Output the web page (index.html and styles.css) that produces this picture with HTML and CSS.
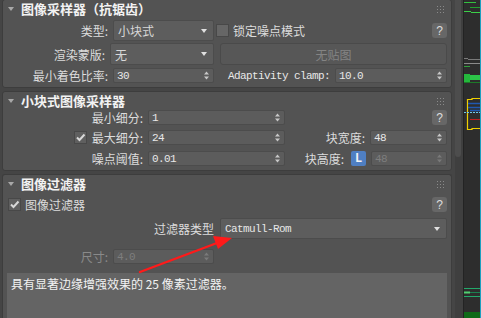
FILE: index.html
```html
<!DOCTYPE html>
<html lang="zh-CN">
<head>
  <meta charset="UTF-8">
  <title>图像采样器</title>
  <link rel="stylesheet" href="styles.css">
</head>
<body>
  <div class="app">
    <div class="panel">

      <!-- 图像采样器（抗锯齿） -->
      <section class="rollout">
        <div class="rollout-head">
          <span class="caret"></span>
          <h2>图像采样器（抗锯齿）</h2>
          <svg class="grip" width="7" height="7"><g fill="#8a8a8a"><rect x="0" y="0" width="1" height="1"/><rect x="3" y="0" width="1" height="1"/><rect x="6" y="0" width="1" height="1"/><rect x="0" y="3" width="1" height="1"/><rect x="3" y="3" width="1" height="1"/><rect x="6" y="3" width="1" height="1"/><rect x="0" y="6" width="1" height="1"/><rect x="3" y="6" width="1" height="1"/><rect x="6" y="6" width="1" height="1"/></g></svg>
        </div>
        <div class="row h21 mt2">
          <label class="lbl w105">类型:</label>
          <div class="dropdown w101">小块式<i class="dd-arrow"></i></div>
          <span class="check ml7"></span>
          <span class="txt">锁定噪点模式</span>
          <span class="help">?</span>
        </div>
        <div class="row h22 mt2">
          <label class="lbl w102">渲染蒙版:</label>
          <div class="dropdown w104">无<i class="dd-arrow"></i></div>
          <div class="map-btn">无贴图</div>
        </div>
        <div class="row h15 mt3">
          <label class="lbl w105">最小着色比率:</label>
          <div class="field w101"><span>30</span><svg class="spin" width="5" height="9"><path d="M0 3.5 L2.5 0.5 L5 3.5Z M0 5.5 L5 5.5 L2.5 8.5Z"/></svg></div>
          <label class="mono-lbl">Adaptivity clamp:</label>
          <div class="field w112 push"><span>10.0</span><svg class="spin" width="5" height="9"><path d="M0 3.5 L2.5 0.5 L5 3.5Z M0 5.5 L5 5.5 L2.5 8.5Z"/></svg></div>
        </div>
      </section>

      <!-- 小块式图像采样器 -->
      <section class="rollout">
        <div class="rollout-head">
          <span class="caret"></span>
          <h2>小块式图像采样器</h2>
          <svg class="grip" width="7" height="7"><g fill="#8a8a8a"><rect x="0" y="0" width="1" height="1"/><rect x="3" y="0" width="1" height="1"/><rect x="6" y="0" width="1" height="1"/><rect x="0" y="3" width="1" height="1"/><rect x="3" y="3" width="1" height="1"/><rect x="6" y="3" width="1" height="1"/><rect x="0" y="6" width="1" height="1"/><rect x="3" y="6" width="1" height="1"/><rect x="6" y="6" width="1" height="1"/></g></svg>
        </div>
        <div class="row h15">
          <label class="lbl w140">最小细分:</label>
          <div class="field w137"><span>1</span><svg class="spin" width="5" height="9"><path d="M0 3.5 L2.5 0.5 L5 3.5Z M0 5.5 L5 5.5 L2.5 8.5Z"/></svg></div>
          <span class="help">?</span>
        </div>
        <div class="row h15 mt5">
          <label class="lbl w140"><span class="check on"><svg width="11" height="11" viewBox="0 0 11 11"><path d="M2 5.5 L4.5 8 L9.5 2.5" fill="none" stroke="#d8d8d8" stroke-width="2"/></svg></span>最大细分:</label>
          <div class="field w137"><span>24</span><svg class="spin" width="5" height="9"><path d="M0 3.5 L2.5 0.5 L5 3.5Z M0 5.5 L5 5.5 L2.5 8.5Z"/></svg></div>
          <label class="lbl push">块宽度:</label>
          <div class="field w77"><span>48</span><svg class="spin" width="5" height="9"><path d="M0 3.5 L2.5 0.5 L5 3.5Z M0 5.5 L5 5.5 L2.5 8.5Z"/></svg></div>
        </div>
        <div class="row h15 mt6">
          <label class="lbl w140">噪点阈值:</label>
          <div class="field w137"><span>0.01</span><svg class="spin" width="5" height="9"><path d="M0 3.5 L2.5 0.5 L5 3.5Z M0 5.5 L5 5.5 L2.5 8.5Z"/></svg></div>
          <label class="lbl push">块高度:</label>
          <span class="lock">L</span>
          <div class="field w76 off"><span>48</span><svg class="spin" width="5" height="9"><path d="M0 3.5 L2.5 0.5 L5 3.5Z M0 5.5 L5 5.5 L2.5 8.5Z"/></svg></div>
        </div>
      </section>

      <!-- 图像过滤器 -->
      <section class="rollout last">
        <div class="rollout-head">
          <span class="caret"></span>
          <h2>图像过滤器</h2>
          <svg class="grip" width="7" height="7"><g fill="#8a8a8a"><rect x="0" y="0" width="1" height="1"/><rect x="3" y="0" width="1" height="1"/><rect x="6" y="0" width="1" height="1"/><rect x="0" y="3" width="1" height="1"/><rect x="3" y="3" width="1" height="1"/><rect x="6" y="3" width="1" height="1"/><rect x="0" y="6" width="1" height="1"/><rect x="3" y="6" width="1" height="1"/><rect x="6" y="6" width="1" height="1"/></g></svg>
        </div>
        <div class="row h15 mt4 indent">
          <span class="check on"><svg width="11" height="11" viewBox="0 0 11 11"><path d="M2 5.5 L4.5 8 L9.5 2.5" fill="none" stroke="#d8d8d8" stroke-width="2"/></svg></span>
          <span class="txt">图像过滤器</span>
          <span class="help">?</span>
        </div>
        <div class="row h21 mt6">
          <label class="lbl w211">过滤器类型</label>
          <div class="dropdown mono w227">Catmull-Rom<i class="dd-arrow"></i></div>
        </div>
        <div class="row h15 mt10">
          <label class="lbl w105 dim">尺寸:</label>
          <div class="field w101 off"><span>4.0</span><svg class="spin" width="5" height="9"><path d="M0 3.5 L2.5 0.5 L5 3.5Z M0 5.5 L5 5.5 L2.5 8.5Z"/></svg></div>
        </div>
        <div class="desc">具有显著边缘增强效果的 25 像素过滤器。</div>
      </section>
    </div>

    <div class="scroll"><div class="thumb"></div></div>

    <div class="viewport">
      <svg width="16" height="318" viewBox="0 0 16 318">
        <g stroke-width="1">
          <path d="M0 2.5 H12" stroke="#33c040"/>
          <path d="M6 7.5 H16" stroke="#22a030"/>
          <path d="M0 11.5 H7 M7 12.5 H16" stroke="#3bd048"/>
          <path d="M0 58.5 H4 M4 59.5 H16" stroke="#7a7a7a"/>
          <path d="M0 63.5 H16" stroke="#8a8a8a"/>
          <path d="M0 66.5 H6" stroke="#2fa03a"/>
          <path d="M0 82.5 H16" stroke="#1d7a28"/>
        </g>
        <rect x="0" y="75" width="16" height="5" fill="#2cc448"/>
        <rect x="0" y="74" width="6" height="8" fill="#24b83c"/>
        <path d="M3.5 99 V129.5 H8 V128.5 H16 M3.5 99.5 H8 V98.5 H16" fill="none" stroke="#f0d000" stroke-width="1.2"/>
        <path d="M4 103.5 H16 M4 107.5 H16 M6 110.5 H16" stroke="#2058b0" stroke-width="1.4"/>
        <path d="M0 112.5 H16" stroke="#70c8e8" stroke-width="1" stroke-dasharray="2 1"/>
        <path d="M6 119.5 H16" stroke="#c02020" stroke-width="1"/>
        <path d="M0 288.5 H16 M0 296.5 H16" stroke="#23a86a" stroke-width="1"/>
        <path d="M0 292.5 H6" stroke="#50d070" stroke-width="2"/>
        <path d="M6 292.5 H16" stroke="#1c8050" stroke-width="1"/>
        <rect x="0" y="312" width="16" height="6" fill="#0f6a18"/>
      </svg>
    </div>
  </div>

  <!-- red annotation arrow -->
  <svg class="annot" width="481" height="318" viewBox="0 0 481 318">
    <path d="M140 272 L217 243" stroke="#ff1a1a" stroke-width="2.4" stroke-linecap="round"/>
    <polygon points="232,238 213,236 218,249" fill="#ff1a1a"/>
  </svg>
</body>
</html>
```

FILE: styles.css
```css
* { box-sizing: border-box; }

body {
  margin: 0;
  width: 481px; height: 318px;
  overflow: hidden;
  position: relative;
  background: #454545;
  font-family: "Noto Sans CJK SC", "Liberation Sans", sans-serif;
  font-size: 12px;
  color: #dcdcdc;
}

.app { display: flex; height: 318px; overflow: hidden; }

/* rollout panel */
.panel {
  width: 455px;
  height: 319px;
  margin-top: -1px;
  padding: 0 3px 0 2px;
  display: flex; flex-direction: column; gap: 3px;
  overflow: hidden;
}

.rollout {
  flex-shrink: 0;
  background: #535353;
  border: 1px solid #3d3d3d;
  border-radius: 3px;
  padding: 0 4px 4px 0;
}
.rollout.last {
  flex: 1 1 0;
  min-height: 0;
  overflow: hidden;
  padding-bottom: 0;
  border-bottom: 0;
  border-radius: 3px 3px 0 0;
}

.rollout-head {
  display: flex; align-items: center;
  height: 18px;
}
.caret {
  width: 0; height: 0;
  margin-left: 5px;
  border-left: 3px solid transparent;
  border-right: 3px solid transparent;
  border-top: 4px solid #a8a8a8;
}
.rollout-head h2 {
  margin: 0 0 0 7px;
  font-size: 13px;
  font-weight: bold;
  line-height: 18px;
  color: #f2f2f2;
}
.grip { margin-left: auto; margin-right: 3px; }

/* rows */
.row { display: flex; align-items: center; }
.h15 { height: 15px; }
.h21 { height: 21px; }
.h22 { height: 22px; }
.mt2 { margin-top: 2px; }
.mt3 { margin-top: 3px; }
.mt4 { margin-top: 4px; }
.mt5 { margin-top: 5px; }
.mt6 { margin-top: 6px; }
.mt10 { margin-top: 10px; }
.indent { padding-left: 5px; }
.push { margin-left: auto; }

.lbl {
  flex-shrink: 0;
  display: flex; align-items: center; justify-content: flex-end;
  margin-right: 5px;
  line-height: 15px;
  white-space: nowrap;
}
.lbl.dim { color: #8a8a8a; }
.w102 { width: 102px; margin-right: 5px; }
.w105 { width: 105px; }
.w140 { width: 140px; }
.w211 { width: 211px; margin-right: 6px; }

.txt { margin-left: 4px; line-height: 15px; }

.mono-lbl {
  margin-left: 14px;
  font-family: "Liberation Mono", monospace;
  font-size: 11px;
  letter-spacing: -0.6px;
  color: #e8e8e8;
}

/* dropdowns */
.dropdown {
  position: relative;
  height: 100%;
  display: flex; align-items: center;
  padding-left: 4px;
  background: #5d5d5d;
  border: 1px solid #4c4c4c;
  border-radius: 2px;
  color: #d8d8d8;
  flex-shrink: 0;
}
.dropdown.mono {
  font-family: "Liberation Mono", monospace;
  font-size: 11px;
  letter-spacing: -0.6px;
  color: #e6e6e6;
}
.dd-arrow {
  position: absolute;
  right: 6px; top: 50%;
  margin-top: -2px;
  width: 0; height: 0;
  border-left: 3px solid transparent;
  border-right: 3px solid transparent;
  border-top: 4px solid #e0e0e0;
}
.w101 { width: 101px; }
.w104 { width: 104px; }
.w227 { width: 227px; }

.map-btn {
  flex: 1;
  height: 100%;
  margin-left: 6px;
  display: flex; align-items: center; justify-content: center;
  background: #575757;
  border: 1px solid #4a4a4a;
  border-radius: 3px;
  color: #848484;
}

/* spinner fields */
.field {
  flex-shrink: 0;
  height: 15px;
  display: flex; align-items: center; justify-content: space-between;
  padding: 0 4px 0 3px;
  background: #5c5c5c;
  border: 1px solid #4c4c4c;
  border-radius: 2px;
  font-family: "Liberation Mono", monospace;
  font-size: 11px;
  letter-spacing: -0.6px;
  color: #e8e8e8;
}
.field.off { color: #7e7e7e; }
.w137 { width: 137px; }
.w112 { width: 112px; }
.w77 { width: 77px; }
.w76 { width: 76px; }

.spin { display: block; fill: #c8c8c8; }
.field.off .spin { fill: #7a7a7a; }

/* checkbox, help, lock */
.check {
  flex-shrink: 0;
  width: 13px; height: 13px;
  display: inline-flex; align-items: center; justify-content: center;
  background: #666;
  border: 1px solid #484848;
}
.check.on { background: #5f5f5f; }
.lbl .check { margin-right: 5px; }
.ml7 { margin-left: 2px; }

.help {
  margin-left: auto;
  width: 15px; height: 15px;
  display: flex; align-items: center; justify-content: center;
  background: #676767;
  border-radius: 3px;
  color: #dedede;
  font-family: "Liberation Sans", sans-serif;
  font-size: 12px;
}

.lock {
  width: 15px; height: 15px;
  margin: 0 5px 0 2px;
  display: flex; align-items: center; justify-content: center;
  background: #4f7fc2;
  border-radius: 2px;
  color: #f4f4f4;
  font-family: "Liberation Mono", monospace;
  font-size: 12px;
  font-weight: bold;
}

/* description */
.desc {
  margin: 9px 0 0 4px;
  height: 60px;
  padding: 2px 4px;
  background: #646464;
  color: #f2f2f2;
  font-size: 12px;
  line-height: 17px;
}

/* scrollbar and side viewport */
.scroll {
  width: 8px;
  background: #3f3f3f;
}
.thumb {
  width: 6px; height: 157px;
  background: #4d4d4d;
  border-radius: 0 0 3px 3px;
}
.viewport {
  flex: 1;
  background: #2d2d2d;
  border-left: 1px solid #232323;
  border-right: 1px solid #1ea0c0;
}
.viewport svg { display: block; }

.annot {
  position: absolute;
  left: 0; top: 0;
  pointer-events: none;
}
```
